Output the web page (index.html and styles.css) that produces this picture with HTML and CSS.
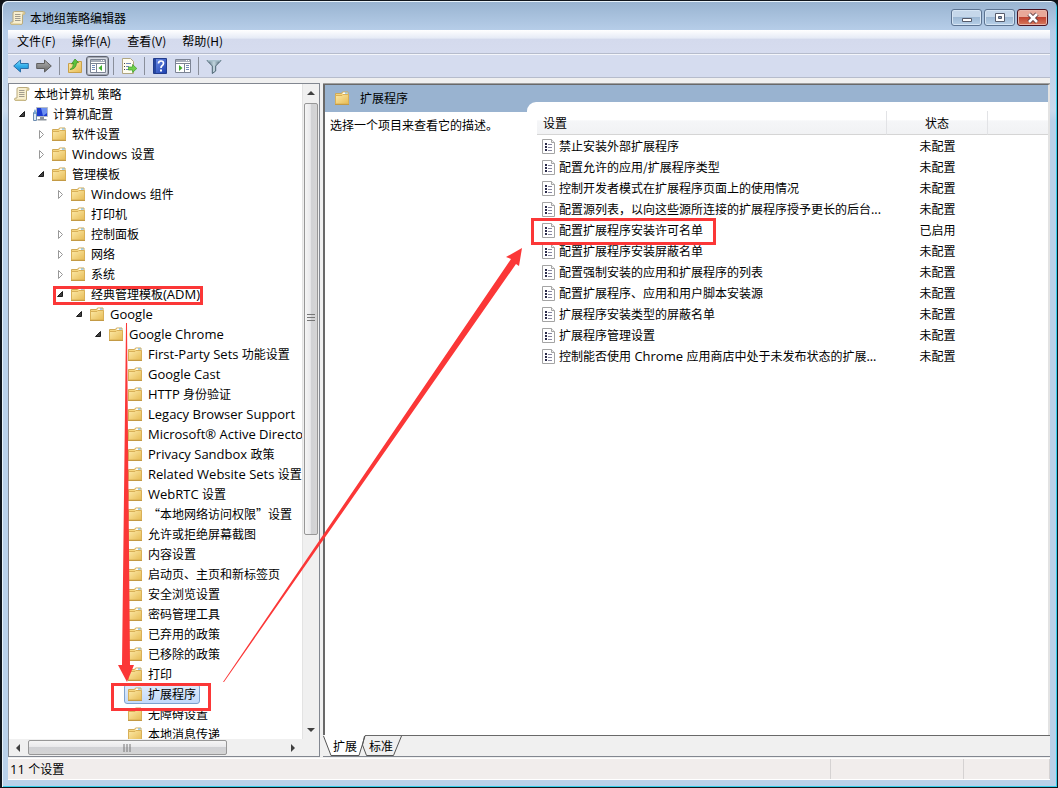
FILE: index.html
```html
<!doctype html>
<html lang="zh-CN">
<head>
    <meta charset="UTF-8">
    <meta name="viewport" content="width=device-width, initial-scale=1.0">
    <title>本地组策略编辑器</title>
    <link rel="stylesheet" href="styles.css">
</head>
<body>
    <!-- Icon definitions -->
    <svg class="defs" width="0" height="0" aria-hidden="true">
        <defs>
            <linearGradient id="gFolder" x1="0" y1="0" x2="1" y2="1">
                <stop offset="0" stop-color="#fdeaa8"/><stop offset="1" stop-color="#e6bb55"/>
            </linearGradient>
            <linearGradient id="gBlue" x1="0" y1="0" x2="0" y2="1">
                <stop offset="0" stop-color="#8fe0fb"/><stop offset="0.5" stop-color="#31aeea"/><stop offset="1" stop-color="#1b83cf"/>
            </linearGradient>
            <linearGradient id="gGrey" x1="0" y1="0" x2="0" y2="1">
                <stop offset="0" stop-color="#b3b3b3"/><stop offset="1" stop-color="#666"/>
            </linearGradient>
            <linearGradient id="gHelp" x1="0" y1="0" x2="1" y2="1">
                <stop offset="0" stop-color="#6f8fe8"/><stop offset="1" stop-color="#1b3fae"/>
            </linearGradient>
            <linearGradient id="gFunnel" x1="0" y1="0" x2="1" y2="0">
                <stop offset="0" stop-color="#56707f"/><stop offset="0.5" stop-color="#c3d6df"/><stop offset="1" stop-color="#466070"/>
            </linearGradient>
            <symbol id="folder" viewBox="0 0 16 16">
                <path d="M1.500 3.500h6l1-1.500h5.500v12h-12.500z" fill="#f5d67f" stroke="#cfa956"/>
                <path d="M9 2.500h4.500v1.500h-5z" fill="#fff"/>
                <path d="M11 2.500h2.500v1h-2.500z" fill="#58a6dc"/>
                <path d="M1.500 5.500h6.500l1-1h5.500v9.500h-13z" fill="url(#gFolder)" stroke="#d9b057"/>
                <path d="M1 14.500h14" stroke="#c39a45"/>
            </symbol>
            <symbol id="scroll" viewBox="0 0 16 16">
                <path d="M4.500 1.500h9q1.500 0 1.500 1.500t-1.500 1.500h-1v8.500q0 1.500-1.500 1.500h-9q-1.500 0-1.500-1.300t1.500-1.200h1v-9q0-1.500 1.500-1.500z" fill="#f8efcf" stroke="#b9aa7c"/>
                <path d="M12.500 4.500v-2q.8-1 2 0v2zM1 13.500h9.500v1h-9z" fill="#d9c78e"/>
                <path d="M5 4.500h5.500M5 6.500h5.500M5 8.500h5.500M5 10.500h5.500" stroke="#a19c8e"/>
            </symbol>
            <symbol id="computer" viewBox="0 0 16 16">
                <path d="M4.500 1.500h11v9h-11z" fill="#1c3bd0" stroke="#b5bcc6"/>
                <path d="M9 2h6v5l-4 3z" fill="#6d91f1"/>
                <path d="M8 11h4v2h2.500v1.500h-9v-1.500h2.500z" fill="#8c939c"/>
                <path d="M1.500 6.500h3v8h-3z" fill="#dfe9f3" stroke="#6d8db0"/>
                <path d="M2 5l1-2 1 2v3h-2z" fill="#79a8d3"/>
            </symbol>
            <symbol id="setting" viewBox="0 0 14 16">
                <path d="M.5.500h9l3 3v11h-12z" fill="#fff" stroke="#a4a4a4"/>
                <path d="M9.500.500v3h3" fill="#eee" stroke="#a4a4a4"/>
                <path d="M3 4h2v2h-2zM3 7h2v2h-2zM3 10h2v2h-2z" fill="#2b2b4a"/>
                <path d="M6 5.500h4M6 8.500h4M6 11.500h4" stroke="#8787a0"/>
            </symbol>
            <symbol id="back" viewBox="0 0 16 16">
                <path d="M.7 8l6.800-6v3.500h7.800v5h-7.800v3.500z" fill="url(#gBlue)" stroke="#2b6fa8"/>
            </symbol>
            <symbol id="forward" viewBox="0 0 16 16">
                <path d="M15.300 8l-6.800-6v3.500h-7.800v5h7.800v3.500z" fill="url(#gGrey)" stroke="#5e5e5e"/>
            </symbol>
            <symbol id="upfolder" viewBox="0 0 16 16">
                <path d="M1.500 5.500h6l1.500-2h5.500v11h-13z" fill="url(#gFolder)" stroke="#c9a04a"/>
                <path d="M3 11.500q3.500-1.500 3.500-6l-2 .5 3.500-5 3.500 3.500-2 .3q-.5 6.500-6.500 6.700z" fill="#5cc33c" stroke="#2f8a1e" stroke-width=".7"/>
            </symbol>
            <symbol id="panelleft" viewBox="0 0 16 16">
                <path d="M.5 1.500h15v13h-15z" fill="#fff" stroke="#7c8494"/>
                <path d="M1 3h14" stroke="#a7adba" stroke-width="2"/>
                <path d="M11 2.500h1M13 2.500h1" stroke="#fff"/>
                <path d="M1 5.500h14M6.500 5.500v9" stroke="#7c8494"/>
                <path d="M2 7.500h3M2 9.500h3M2 11.500h3" stroke="#7289b8"/>
                <path d="M12 7v6l-3.500-3z" fill="#3fae2c"/>
            </symbol>
            <symbol id="panelright" viewBox="0 0 16 16">
                <path d="M.5 1.500h15v13h-15z" fill="#fff" stroke="#7c8494"/>
                <path d="M1 3h14" stroke="#a7adba" stroke-width="2"/>
                <path d="M11 2.500h1M13 2.500h1" stroke="#fff"/>
                <path d="M1 5.500h14M9.500 5.500v9" stroke="#7c8494"/>
                <path d="M11 7.500h3M11 9.500h3M11 11.500h3" stroke="#7289b8"/>
                <path d="M4 7v6l3.500-3z" fill="#3fae2c"/>
            </symbol>
            <symbol id="export" viewBox="0 0 16 16">
                <path d="M1.500.5h8l3 3v12h-11z" fill="#fffdf0" stroke="#b0a680"/>
                <path d="M3 5.500h1M3 8.500h1M3 11.500h1" stroke="#444"/>
                <path d="M5 5.500h5M5 8.500h3M5 11.500h3" stroke="#7289b8"/>
                <path d="M7.500 9h4v-2.500l4.300 4-4.300 4v-2.500h-4z" fill="#6fd04d" stroke="#3b9c25" stroke-width=".7"/>
            </symbol>
            <symbol id="help" viewBox="0 0 16 16">
                <path d="M1.500.5h13v15h-13z" fill="url(#gHelp)" stroke="#223c8c"/>
                <path d="M2 1h2v14h-2z" fill="#27479f"/>
                <path d="M6.500 5.500q0-2.500 2.500-2.500t2.500 2.300q0 1.500-1.500 2.500-1 .7-1 2.200" fill="none" stroke="#fff" stroke-width="1.700"/>
                <path d="M8 11.500h2v2h-2z" fill="#fff"/>
            </symbol>
            <symbol id="filter" viewBox="0 0 16 16">
                <path d="M1 2.500h14l-5.300 5.500v5l-3.400 2.500v-7.500z" fill="url(#gFunnel)" stroke="#4d6573"/>
                <path d="M1.500 2h13v1.500h-13z" fill="#a9c1cd"/>
            </symbol>
            <symbol id="open" viewBox="0 0 10 10">
                <path d="M7.500 2.500v5h-5z" fill="#404040" stroke="#1e1e1e"/>
            </symbol>
            <symbol id="closed" viewBox="0 0 10 10">
                <path d="M3.500 1.500v8l4-4z" fill="#fff" stroke="#989898"/>
            </symbol>
        </defs>
    </svg>

    <div class="window">
        <!-- Title bar -->
        <header class="titlebar">
            <svg class="icon"><use href="#scroll"/></svg>
            <h1>本地组策略编辑器</h1>
            <div class="caption-buttons">
                <button type="button" aria-label="最小化"><svg width="12" height="12"><path d="M1.500 6.500h9v3h-9z" fill="#fff" stroke="#555b6b"/></svg></button>
                <button type="button" aria-label="最大化"><svg width="12" height="12"><path d="M1.500 1.500h9v8h-9z" fill="#fff" stroke="#555b6b"/><path d="M4.500 4.500h3v2h-3z" fill="#7f9dc0" stroke="#555b6b"/></svg></button>
                <button type="button" class="close" aria-label="关闭"><svg width="12" height="12"><path d="M2 2l8 8M10 2l-8 8" stroke="#5b3a40" stroke-width="4.500"/><path d="M2 2l8 8M10 2l-8 8" stroke="#fff" stroke-width="2.600"/></svg></button>
            </div>
        </header>

        <div class="client">
            <nav class="menubar">
                <a href="#">文件(F)</a>
                <a href="#">操作(A)</a>
                <a href="#">查看(V)</a>
                <a href="#">帮助(H)</a>
            </nav>

            <div class="toolbar">
                <button type="button" aria-label="后退"><svg class="icon"><use href="#back"/></svg></button>
                <button type="button" aria-label="前进"><svg class="icon"><use href="#forward"/></svg></button>
                <span class="sep"></span>
                <button type="button" aria-label="上一级"><svg class="icon"><use href="#upfolder"/></svg></button>
                <button type="button" class="pressed" aria-label="控制台树"><svg class="icon"><use href="#panelleft"/></svg></button>
                <span class="sep"></span>
                <button type="button" aria-label="导出列表"><svg class="icon"><use href="#export"/></svg></button>
                <span class="sep"></span>
                <button type="button" aria-label="帮助"><svg class="icon"><use href="#help"/></svg></button>
                <button type="button" aria-label="操作窗格"><svg class="icon"><use href="#panelright"/></svg></button>
                <span class="sep"></span>
                <button type="button" aria-label="筛选器"><svg class="icon"><use href="#filter"/></svg></button>
            </div>

            <main class="panes">
                <!-- Console tree -->
                <section class="tree-pane">
                    <div class="tree">
                        <a class="node root" href="#"><svg class="icon"><use href="#scroll"/></svg><span>本地计算机<span class="en"> </span>策略</span></a>
                        <ul>
                            <li>
                                <div class="row"><button type="button" class="toggle" aria-label="折叠"><svg><use href="#open"/></svg></button><a class="node" href="#"><svg class="icon"><use href="#computer"/></svg>计算机配置</a></div>
                                <ul>
                                    <li><div class="row"><button type="button" class="toggle" aria-label="展开"><svg><use href="#closed"/></svg></button><a class="node" href="#"><svg class="icon"><use href="#folder"/></svg>软件设置</a></div></li>
                                    <li><div class="row"><button type="button" class="toggle" aria-label="展开"><svg><use href="#closed"/></svg></button><a class="node" href="#"><svg class="icon"><use href="#folder"/></svg><span><span class="en">Windows </span>设置</span></a></div></li>
                                    <li>
                                        <div class="row"><button type="button" class="toggle" aria-label="折叠"><svg><use href="#open"/></svg></button><a class="node" href="#"><svg class="icon"><use href="#folder"/></svg>管理模板</a></div>
                                        <ul>
                                            <li><div class="row"><button type="button" class="toggle" aria-label="展开"><svg><use href="#closed"/></svg></button><a class="node" href="#"><svg class="icon"><use href="#folder"/></svg><span><span class="en">Windows </span>组件</span></a></div></li>
                                            <li><div class="row leaf"><a class="node" href="#"><svg class="icon"><use href="#folder"/></svg>打印机</a></div></li>
                                            <li><div class="row"><button type="button" class="toggle" aria-label="展开"><svg><use href="#closed"/></svg></button><a class="node" href="#"><svg class="icon"><use href="#folder"/></svg>控制面板</a></div></li>
                                            <li><div class="row"><button type="button" class="toggle" aria-label="展开"><svg><use href="#closed"/></svg></button><a class="node" href="#"><svg class="icon"><use href="#folder"/></svg>网络</a></div></li>
                                            <li><div class="row"><button type="button" class="toggle" aria-label="展开"><svg><use href="#closed"/></svg></button><a class="node" href="#"><svg class="icon"><use href="#folder"/></svg>系统</a></div></li>
                                            <li>
                                                <div class="row"><button type="button" class="toggle" aria-label="折叠"><svg><use href="#open"/></svg></button><a class="node" href="#"><svg class="icon"><use href="#folder"/></svg><span>经典管理模板<span class="en">(ADM)</span></span></a></div>
                                                <ul>
                                                    <li>
                                                        <div class="row"><button type="button" class="toggle" aria-label="折叠"><svg><use href="#open"/></svg></button><a class="node en" href="#"><svg class="icon"><use href="#folder"/></svg>Google</a></div>
                                                        <ul>
                                                            <li>
                                                                <div class="row"><button type="button" class="toggle" aria-label="折叠"><svg><use href="#open"/></svg></button><a class="node en" href="#"><svg class="icon"><use href="#folder"/></svg>Google Chrome</a></div>
                                                                <ul>
                                                                    <li><div class="row leaf"><a class="node" href="#"><svg class="icon"><use href="#folder"/></svg><span><span class="en">First-Party Sets </span>功能设置</span></a></div></li>
                                                                    <li><div class="row leaf"><a class="node en" href="#"><svg class="icon"><use href="#folder"/></svg>Google Cast</a></div></li>
                                                                    <li><div class="row leaf"><a class="node" href="#"><svg class="icon"><use href="#folder"/></svg><span><span class="en">HTTP </span>身份验证</span></a></div></li>
                                                                    <li><div class="row leaf"><a class="node en" href="#"><svg class="icon"><use href="#folder"/></svg>Legacy Browser Support</a></div></li>
                                                                    <li><div class="row leaf"><a class="node en" href="#"><svg class="icon"><use href="#folder"/></svg>Microsoft® Active Directo</a></div></li>
                                                                    <li><div class="row leaf"><a class="node" href="#"><svg class="icon"><use href="#folder"/></svg><span><span class="en">Privacy Sandbox </span>政策</span></a></div></li>
                                                                    <li><div class="row leaf"><a class="node" href="#"><svg class="icon"><use href="#folder"/></svg><span><span class="en">Related Website Sets </span>设置</span></a></div></li>
                                                                    <li><div class="row leaf"><a class="node" href="#"><svg class="icon"><use href="#folder"/></svg><span><span class="en">WebRTC </span>设置</span></a></div></li>
                                                                    <li><div class="row leaf"><a class="node" href="#"><svg class="icon"><use href="#folder"/></svg>“本地网络访问权限”设置</a></div></li>
                                                                    <li><div class="row leaf"><a class="node" href="#"><svg class="icon"><use href="#folder"/></svg>允许或拒绝屏幕截图</a></div></li>
                                                                    <li><div class="row leaf"><a class="node" href="#"><svg class="icon"><use href="#folder"/></svg>内容设置</a></div></li>
                                                                    <li><div class="row leaf"><a class="node" href="#"><svg class="icon"><use href="#folder"/></svg>启动页、主页和新标签页</a></div></li>
                                                                    <li><div class="row leaf"><a class="node" href="#"><svg class="icon"><use href="#folder"/></svg>安全浏览设置</a></div></li>
                                                                    <li><div class="row leaf"><a class="node" href="#"><svg class="icon"><use href="#folder"/></svg>密码管理工具</a></div></li>
                                                                    <li><div class="row leaf"><a class="node" href="#"><svg class="icon"><use href="#folder"/></svg>已弃用的政策</a></div></li>
                                                                    <li><div class="row leaf"><a class="node" href="#"><svg class="icon"><use href="#folder"/></svg>已移除的政策</a></div></li>
                                                                    <li><div class="row leaf"><a class="node" href="#"><svg class="icon"><use href="#folder"/></svg>打印</a></div></li>
                                                                    <li><div class="row leaf"><a class="node selected" href="#"><svg class="icon"><use href="#folder"/></svg>扩展程序</a></div></li>
                                                                    <li><div class="row leaf"><a class="node" href="#"><svg class="icon"><use href="#folder"/></svg>无障碍设置</a></div></li>
                                                                    <li><div class="row leaf"><a class="node" href="#"><svg class="icon"><use href="#folder"/></svg>本地消息传递</a></div></li>
                                                                </ul>
                                                            </li>
                                                        </ul>
                                                    </li>
                                                </ul>
                                            </li>
                                        </ul>
                                    </li>
                                </ul>
                            </li>
                        </ul>
                    </div>
                    <div class="vbar">
                        <svg class="arrow" width="8" height="8"><path d="M0 6h8l-4-4z" fill="#404040"/></svg>
                        <div class="track"><div class="thumb"><svg width="8" height="9"><path d="M0 .5h8M0 3.500h8M0 6.500h8" stroke="#777"/></svg></div></div>
                        <svg class="arrow" width="8" height="8"><path d="M0 2h8l-4 4z" fill="#404040"/></svg>
                    </div>
                    <div class="hbar">
                        <svg class="arrow" width="8" height="8"><path d="M6 0v8l-4-4z" fill="#404040"/></svg>
                        <div class="track"><div class="thumb"><svg width="9" height="8"><path d="M1 0v8M4 0v8M7 0v8" stroke="#777"/></svg></div></div>
                        <svg class="arrow" width="8" height="8"><path d="M2 0v8l4-4z" fill="#404040"/></svg>
                    </div>
                </section>

                <!-- Result pane -->
                <section class="result-pane">
                    <div class="result">
                        <h2 class="band"><svg class="icon"><use href="#folder"/></svg>扩展程序</h2>
                        <p class="description">选择一个项目来查看它的描述。</p>
                        <div class="list">
                            <table>
                                <colgroup><col class="col-name"><col class="col-state"><col></colgroup>
                                <thead>
                                    <tr><th>设置</th><th class="state">状态</th><th></th></tr>
                                </thead>
                                <tbody>
                                    <tr><td><svg><use href="#setting"/></svg>禁止安装外部扩展程序</td><td class="state">未配置</td><td></td></tr>
                                    <tr><td><svg><use href="#setting"/></svg>配置允许的应用/扩展程序类型</td><td class="state">未配置</td><td></td></tr>
                                    <tr><td><svg><use href="#setting"/></svg>控制开发者模式在扩展程序页面上的使用情况</td><td class="state">未配置</td><td></td></tr>
                                    <tr><td><svg><use href="#setting"/></svg>配置源列表，以向这些源所连接的扩展程序授予更长的后台...</td><td class="state">未配置</td><td></td></tr>
                                    <tr><td><svg><use href="#setting"/></svg>配置扩展程序安装许可名单</td><td class="state">已启用</td><td></td></tr>
                                    <tr><td><svg><use href="#setting"/></svg>配置扩展程序安装屏蔽名单</td><td class="state">未配置</td><td></td></tr>
                                    <tr><td><svg><use href="#setting"/></svg>配置强制安装的应用和扩展程序的列表</td><td class="state">未配置</td><td></td></tr>
                                    <tr><td><svg><use href="#setting"/></svg>配置扩展程序、应用和用户脚本安装源</td><td class="state">未配置</td><td></td></tr>
                                    <tr><td><svg><use href="#setting"/></svg>扩展程序安装类型的屏蔽名单</td><td class="state">未配置</td><td></td></tr>
                                    <tr><td><svg><use href="#setting"/></svg>扩展程序管理设置</td><td class="state">未配置</td><td></td></tr>
                                    <tr><td><svg><use href="#setting"/></svg>控制能否使用<span class="en"> Chrome </span>应用商店中处于未发布状态的扩展...</td><td class="state">未配置</td><td></td></tr>
                                </tbody>
                            </table>
                        </div>
                    </div>
                    <div class="tabs">
                        <button type="button" class="tab active">
                            <svg width="42" height="21"><path d="M0-1h42l-6 20.500h-28z" fill="#fff"/><path d="M.5 0l7.500 19.500h28l6-19.500" fill="none" stroke="#555"/></svg>
                            <span>扩展</span>
                        </button>
                        <button type="button" class="tab">
                            <svg width="42" height="21"><path d="M1.500 0l-2 9 4 10.500h27l8-19.500" fill="none" stroke="#555"/></svg>
                            <span>标准</span>
                        </button>
                    </div>
                </section>
            </main>

            <footer class="statusbar">
                <span class="count"><span class="en">11 </span>个设置</span>
                <span class="cell"></span>
                <span class="cell last"></span>
            </footer>
        </div>
    </div>

    <!-- Red marks drawn over the window -->
    <svg class="marks" width="1058" height="788" aria-hidden="true">
        <g fill="none" stroke="#fb3737" stroke-width="3">
            <rect x="54.500" y="287.500" width="147" height="16"/>
            <rect x="112.500" y="684.500" width="97" height="25"/>
            <rect x="532.500" y="219.500" width="182" height="24"/>
        </g>
        <g fill="#fb3737">
            <path d="M126 323h1l3 342h4l-7 17-9-17h4z"/>
            <path d="M223 682l288-423-5-2 16-9-3 18-3-2-292 418z"/>
        </g>
    </svg>
</body>
</html>
```
FILE: styles.css
```css
* {
    margin: 0;
    padding: 0;
    box-sizing: border-box;
}

body {
    font-family: "Noto Sans CJK SC", "Noto Sans", sans-serif;
    font-size: 12px;
    line-height: 20px;
    color: #000;
    background: #101418;
}

a {
    color: inherit;
    text-decoration: none;
}

button {
    font: inherit;
    color: inherit;
    background: none;
    border: none;
}

ul {
    list-style: none;
}

.defs {
    position: absolute;
}

.icon {
    width: 16px;
    height: 16px;
    flex: none;
}

/* Latin runs next to Chinese text */
.en {
    font-family: "Open Sans", "Noto Sans", sans-serif;
    font-size: 13px;
    line-height: 18px;
    white-space: pre;
}

/* Window frame */
.window {
    height: 100vh;
    display: flex;
    flex-direction: column;
    padding: 0 7px 7px 6px;
    border: 1px solid #10161c;
    border-left-width: 2px;
    border-radius: 7px 7px 0 0;
    background: linear-gradient(#98b3d0, #b7cee9 30px, #c9daee 110px, #b9d1ea 120px);
    box-shadow: inset 1px 1px 0 #e8f3fb, inset -1px -1px 0 #35cdea;
}

.titlebar {
    display: flex;
    align-items: center;
    gap: 4px;
    height: 29px;
    padding: 4px 2px 0 2px;
}

.titlebar h1 {
    flex: 1;
    font-size: 12px;
    font-weight: normal;
}

.caption-buttons {
    display: flex;
    gap: 2px;
}

.caption-buttons button {
    display: flex;
    align-items: center;
    justify-content: center;
    width: 31px;
    height: 17px;
    border: 1px solid #5c7391;
    border-radius: 3px;
    background: linear-gradient(#c5d7ea 45%, #9db8d4 50%, #b7d0e8);
    box-shadow: inset 0 0 0 1px #d6e5f4;
}

.caption-buttons .close {
    border-color: #4b1320;
    background: linear-gradient(#e8a899 45%, #c14331 50%, #d67a5d);
    box-shadow: inset 0 0 0 1px #e9b5a9;
}

.client {
    flex: 1;
    min-height: 0;
    display: flex;
    flex-direction: column;
    background: #f0f0f0;
}

.menubar {
    display: flex;
    gap: 16px;
    height: 24px;
    padding: 1px 9px;
    border-bottom: 1px solid #b6bccc;
    background: linear-gradient(#fff, #e6ebf6 35%, #d4daed 40%, #d6dcef);
}

/* Toolbar */
.toolbar {
    display: flex;
    align-items: center;
    height: 24px;
    padding: 0 1px;
    background: #d5dcef;
    border-top: 1px solid #f4f6fb;
    border-bottom: 1px solid #b6bccc;
}

.toolbar button {
    display: flex;
    align-items: center;
    justify-content: center;
    width: 23px;
    height: 20px;
}

.toolbar .pressed {
    border: 1px solid #5f6470;
    border-radius: 3px;
    background: #d9dde6;
    box-shadow: inset 0 0 0 1px #a3a8b5;
}

.sep {
    width: 1px;
    height: 18px;
    margin: 0 3px 0 4px;
    background: #8a8f9b;
}

.panes {
    flex: 1;
    min-height: 0;
    display: flex;
    gap: 3px;
    padding: 5px 0 1px;
}

/* Console tree */
.tree-pane {
    display: grid;
    grid-template-columns: 1fr 17px;
    grid-template-rows: 1fr 17px;
    width: 312px;
    border: 1px solid #828790;
    background: #f0f0f0;
}

.tree {
    overflow: hidden;
    min-height: 0;
    padding-left: 3px;
    background: #fff;
    white-space: nowrap;
}

.tree ul {
    padding-left: 19px;
}

.tree > ul {
    padding-left: 5px;
}

.row {
    display: flex;
    height: 20px;
}

.leaf {
    padding-left: 12px;
}

.toggle {
    display: flex;
    align-items: center;
    width: 12px;
}

.toggle svg {
    width: 10px;
    height: 10px;
}

.node {
    display: flex;
    align-items: center;
    gap: 5px;
    height: 20px;
    padding: 0 3px 0 1px;
    border: 1px solid transparent;
    border-radius: 3px;
}

.row .node {
    padding-left: 2px;
}

.root {
    gap: 4px;
}

.selected {
    border-color: #7da2ce;
    background: linear-gradient(#dfebfb, #c2dafa);
}

/* Scroll bars */
.vbar,
.hbar {
    display: flex;
    align-items: center;
    background: #f0f0f0;
}

.vbar {
    flex-direction: column;
    padding: 5px 1px;
    border-left: 1px solid #e3e3e3;
}

.hbar {
    padding: 1px 5px;
}

.arrow {
    flex: none;
}

.track {
    flex: 1;
    align-self: stretch;
}

.thumb {
    display: flex;
    align-items: center;
    justify-content: center;
    border: 1px solid #979797;
    border-radius: 2px;
}

.vbar .track {
    padding: 6px 0;
}

.vbar .thumb {
    height: 70%;
    background: linear-gradient(to right, #f5f5f5, #e9e9eb 45%, #d0d1d4 50%, #d5d5d5);
}

.hbar .track {
    padding: 0 6px;
}

.hbar .thumb {
    width: 78%;
    height: 15px;
    background: linear-gradient(#f5f5f5, #e9e9eb 45%, #d0d1d4 50%, #d5d5d5);
}

/* Result pane */
.result-pane {
    flex: 1;
    min-width: 0;
    display: flex;
    flex-direction: column;
    border-top: 1px solid #a0a0a0;
    border-bottom: 1px solid #828790;
}

.result {
    flex: 1;
    min-height: 0;
    display: grid;
    grid-template-columns: 202px 1fr;
    grid-template-rows: 17px 10px 1fr;
    border-left: 2px solid #696969;
    border-top: 1px solid #696969;
    border-right: 2px solid #e3e3e3;
    background: #fff;
}

.band {
    grid-area: 1 / 1 / 3 / 3;
    display: flex;
    align-items: center;
    gap: 10px;
    padding: 0 0 2px 9px;
    font-size: 12px;
    font-weight: normal;
    background: #99b3d0;
}

.description {
    grid-area: 3 / 1;
    padding: 3px 5px;
}

.list {
    grid-area: 2 / 2 / 4 / 3;
    min-width: 0;
    padding: 9px 0 0 10px;
    border-top-left-radius: 9px;
    background: #fff;
}

table {
    width: 100%;
    table-layout: fixed;
    border-collapse: separate;
    border-spacing: 0;
}

.col-name {
    width: 350px;
}

.col-state {
    width: 101px;
}

th {
    height: 24px;
    padding-left: 6px;
    font-weight: normal;
    text-align: left;
    border-right: 1px solid #e2e3e6;
    border-bottom: 1px solid #d5d5d5;
    background: linear-gradient(#fff 40%, #f5f6f8 42%, #f1f2f4);
}

th:last-child {
    border-right: none;
}

td {
    height: 21px;
    padding-left: 5px;
    white-space: nowrap;
}

td svg {
    width: 14px;
    height: 16px;
    margin-right: 3px;
    vertical-align: middle;
}

.state {
    padding: 0;
    text-align: center;
}

/* Tabs under the list */
.tabs {
    display: flex;
    height: 21px;
    border-top: 1px solid #696969;
}

.tab {
    display: grid;
    width: 40px;
    height: 20px;
}

.tab svg,
.tab span {
    grid-area: 1 / 1;
}

.tab svg {
    overflow: visible;
}

.tab span {
    z-index: 1;
    padding-left: 10px;
    text-align: left;
}

.tab + .tab span {
    padding-left: 6px;
}

/* Status bar */
.statusbar {
    display: flex;
    height: 22px;
    border-top: 1px solid #fff;
    border-bottom: 1px solid #fff;
    background: #f1edec;
}

.count {
    flex: 1;
    padding-left: 2px;
}

.cell {
    width: 133px;
    border-left: 1px solid #d5d2d2;
}

.last {
    width: 87px;
    border-right: 1px solid #d5d2d2;
}

.marks {
    position: absolute;
    top: 0;
    left: 0;
    pointer-events: none;
}
```
